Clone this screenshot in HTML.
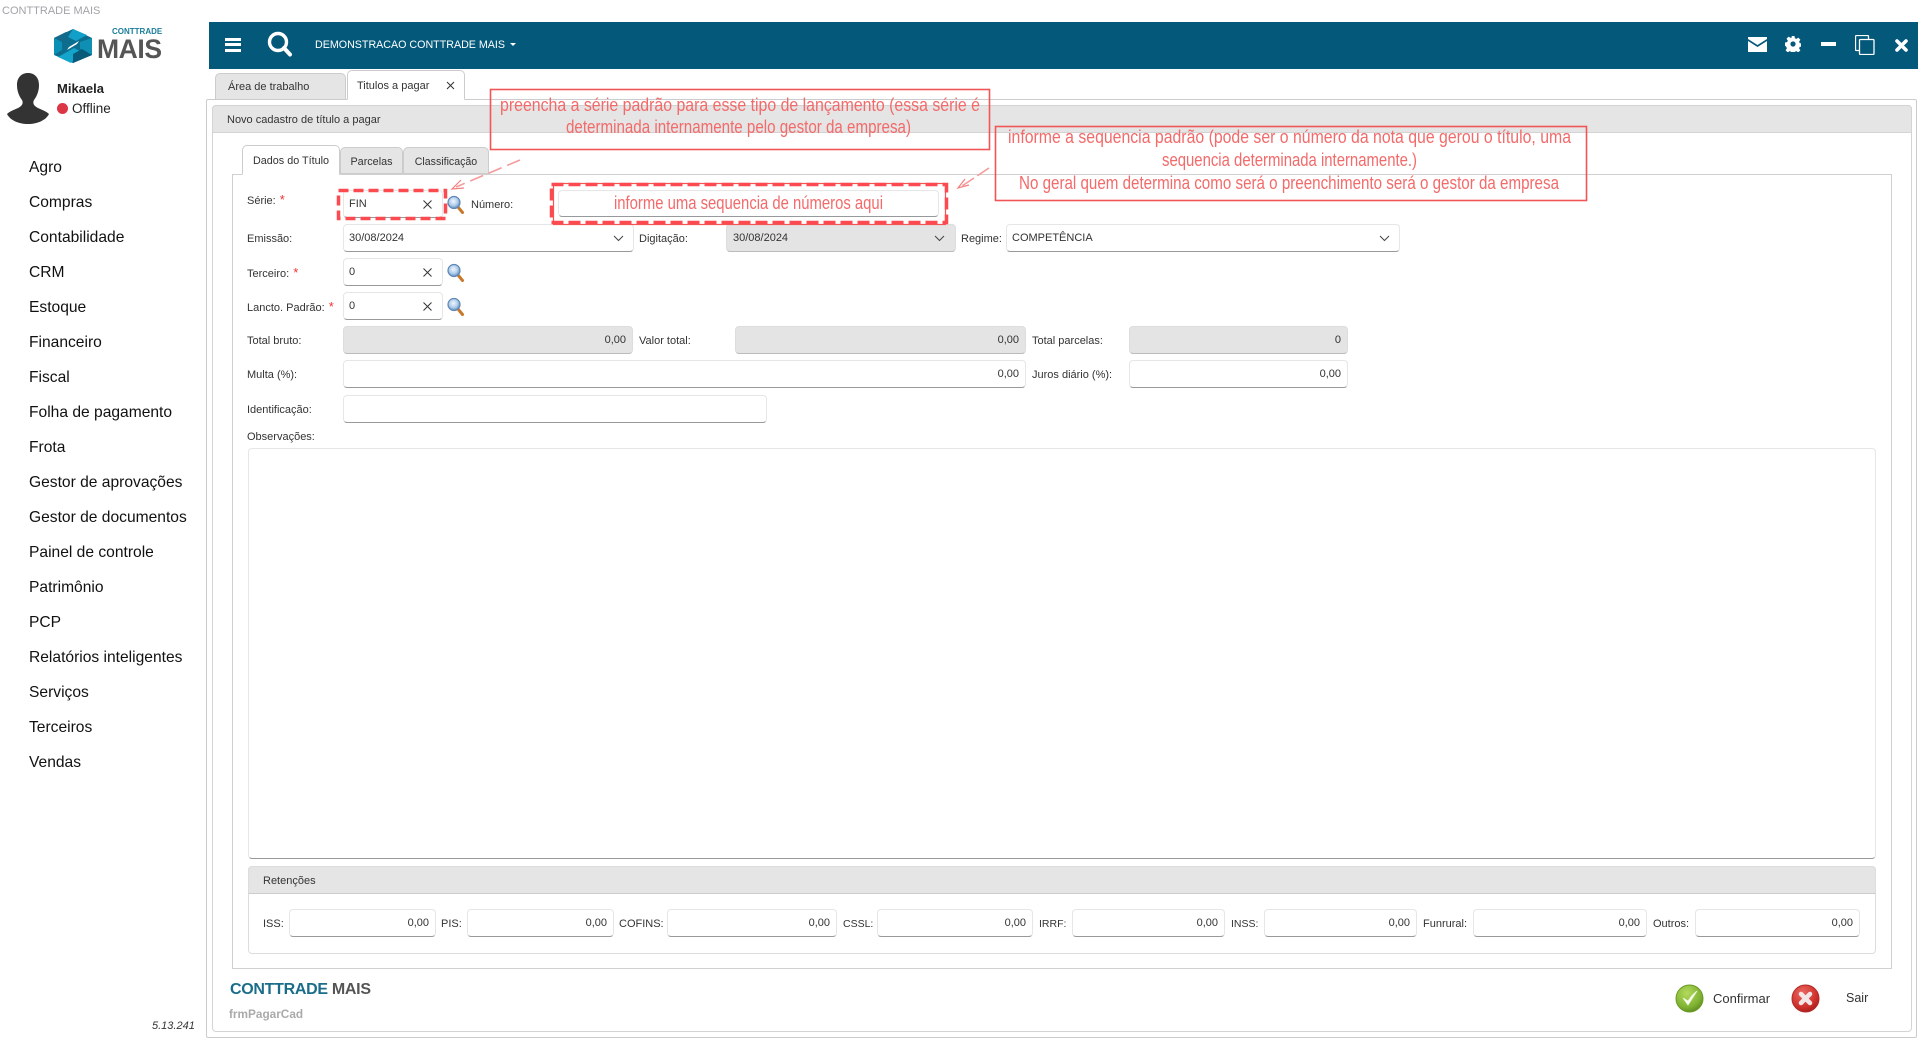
<!DOCTYPE html>
<html lang="pt-BR">
<head>
<meta charset="utf-8">
<title>CONTTRADE MAIS</title>
<style>
html,body{margin:0;padding:0;background:#fff;}
body{position:relative;width:1918px;height:1039px;overflow:hidden;font-family:"Liberation Sans",Arial,sans-serif;font-size:11px;color:#333;}
div,span{box-sizing:border-box;}
.a{position:absolute;}
.l{position:absolute;line-height:14px;white-space:nowrap;color:#333;font-size:11px;margin-top:1px;}
.s{color:#e33;font-size:13px;margin-left:1px;}
.i{position:absolute;height:28px;background:#fff;border:1px solid #e6e6e6;border-bottom:1px solid #999;border-radius:4px;line-height:27px;padding:0 6px;font-size:11px;color:#333;white-space:nowrap;}
.d{background:#e4e4e4;border:1px solid #ddd;border-bottom:1px solid #bbb;}
.r{text-align:right;}
.m{position:absolute;left:29px;font-size:15.6px;line-height:20px;color:#111;white-space:nowrap;margin-top:1px;}
.x{position:absolute;right:10px;top:9px;}
.t{position:absolute;background:#e5e5e5;border:1px solid #ccc;border-bottom:1px solid #ccc;border-radius:5px 5px 0 0;text-align:center;white-space:nowrap;}
.on{background:#fff;border-bottom:1px solid #fff;}
.lens{position:absolute;width:17px;height:19px;}
</style>
</head>
<body>
<svg width="0" height="0" style="position:absolute">
  <defs>
    <radialGradient id="gl" cx="45%" cy="40%" r="65%"><stop offset="0" stop-color="#f0f6fc"/><stop offset="0.55" stop-color="#b0cdea"/><stop offset="1" stop-color="#4f7db8"/></radialGradient>
    <radialGradient id="gg" cx="40%" cy="30%" r="75%"><stop offset="0" stop-color="#b4da5c"/><stop offset="0.7" stop-color="#7fb233"/><stop offset="1" stop-color="#5a8a1c"/></radialGradient>
    <radialGradient id="gr" cx="40%" cy="30%" r="75%"><stop offset="0" stop-color="#ea6a62"/><stop offset="0.7" stop-color="#cf2f2b"/><stop offset="1" stop-color="#a31d1b"/></radialGradient>
  </defs>
</svg>

<div class="a" style="left:2px;top:4px;font-size:11px;line-height:14px;color:#a3a3a8;white-space:nowrap;">CONTTRADE MAIS</div>

<!-- logo -->
<svg class="a" style="left:52px;top:28px" width="42" height="36" viewBox="0 0 42 36">
  <polygon points="21,1 40,10 40,27 21,35 2,27 2,10" fill="#0d6d8f"/>
  <polygon points="2,10 14,4 21,8 10,14 10,22 2,27" fill="#136a8a"/>
  <polygon points="21,1 35,7 24,13 16,9" fill="#12a0c9"/>
  <polygon points="40,10 40,27 28,21 28,14" fill="#0f8fb4"/>
  <polygon points="2,10 10,14 10,22 2,27" fill="#0b90b5"/>
  <polygon points="6,29 22,20 30,24 19,35" fill="#14a5cc"/>
  <polygon points="21,35 40,27 30,21 21,26" fill="#095a78"/>
  <polygon points="17,19 27,13 25,16 15,22" fill="#fff"/>
</svg>
<div class="a" style="left:112px;top:27px;font-size:8px;line-height:10px;font-weight:bold;color:#1a7d9a;white-space:nowrap;">CONTTRADE</div>
<div class="a" style="left:97px;top:34px;font-size:26.5px;line-height:30px;font-weight:bold;color:#555;white-space:nowrap;letter-spacing:-.4px;">MAIS</div>

<!-- user -->
<svg class="a" style="left:7px;top:73px" width="42" height="51" viewBox="0 0 42 51">
  <path d="M21 0C14 0 10 5 10 12c0 6 2 11 5 15 1 2 1 4-1 6-3 3-10 4-14 8 3 6 11 10 21 10s18-4 21-10c-4-4-11-5-14-8-2-2-2-4-1-6 3-4 5-9 5-15C32 5 28 0 21 0z" fill="#333"/>
</svg>
<div class="a" style="left:57px;top:81px;font-size:13px;line-height:15px;font-weight:bold;color:#222;">Mikaela</div>
<div class="a" style="left:57px;top:103px;width:11px;height:11px;border-radius:50%;background:#dc3545;"></div>
<div class="a" style="left:72px;top:101px;font-size:13.5px;line-height:16px;color:#222;">Offline</div>

<!-- menu -->
<div class="m" style="top:157px">Agro</div>
<div class="m" style="top:192px">Compras</div>
<div class="m" style="top:227px">Contabilidade</div>
<div class="m" style="top:262px">CRM</div>
<div class="m" style="top:297px">Estoque</div>
<div class="m" style="top:332px">Financeiro</div>
<div class="m" style="top:367px">Fiscal</div>
<div class="m" style="top:402px">Folha de pagamento</div>
<div class="m" style="top:437px">Frota</div>
<div class="m" style="top:472px">Gestor de aprovações</div>
<div class="m" style="top:507px">Gestor de documentos</div>
<div class="m" style="top:542px">Painel de controle</div>
<div class="m" style="top:577px">Patrimônio</div>
<div class="m" style="top:612px">PCP</div>
<div class="m" style="top:647px">Relatórios inteligentes</div>
<div class="m" style="top:682px">Serviços</div>
<div class="m" style="top:717px">Terceiros</div>
<div class="m" style="top:752px">Vendas</div>
<div class="a" style="left:152px;top:1020px;font-size:11px;line-height:13px;font-style:italic;color:#333;">5.13.241</div>

<!-- header -->
<div class="a" style="left:209px;top:22px;width:1709px;height:47px;background:#04587a;"></div>
<div class="a" style="left:225px;top:38px;width:16px;height:3px;background:#fff;"></div>
<div class="a" style="left:225px;top:43px;width:16px;height:3px;background:#fff;"></div>
<div class="a" style="left:225px;top:49px;width:16px;height:3px;background:#fff;"></div>
<svg class="a" style="left:267px;top:31px" width="26" height="26" viewBox="0 0 26 26"><circle cx="11" cy="11" r="8.5" fill="none" stroke="#fff" stroke-width="3.4"/><path d="M17 17l6 6.5" stroke="#fff" stroke-width="4" stroke-linecap="round"/></svg>
<div class="a" style="left:315px;top:38px;font-size:10.7px;line-height:14px;color:#fff;white-space:nowrap;">DEMONSTRACAO CONTTRADE MAIS</div>
<div class="a" style="left:510px;top:43px;width:0;height:0;border-left:3px solid transparent;border-right:3px solid transparent;border-top:3px solid #fff;"></div>
<svg class="a" style="left:1748px;top:36px" width="20" height="17" viewBox="0 0 20 17"><path d="M0 1h19v2l-9.500 6L0 3z" fill="#fff"/><path d="M0 5l9.500 6L19 5v11H0z" fill="#fff"/></svg>
<svg class="a" style="left:1785px;top:36px" width="16" height="16" viewBox="0 0 16 16"><path d="M6.500 0h3l.4 2.300 1.500.6 1.900-1.300 2.100 2.100-1.300 1.900.6 1.500 2.300.4v3l-2.300.4-.6 1.500 1.300 1.900-2.100 2.100-1.900-1.300-1.500.6-.4 2.300h-3l-.4-2.300-1.500-.6-1.900 1.300-2.100-2.100 1.300-1.900-.6-1.500L-.1 9.500v-3l2.300-.4.6-1.500L1.500 2.700l2.100-2.100 1.900 1.300 1.500-.6z" fill="#fff"/><circle cx="8" cy="8" r="2.600" fill="#04587a"/></svg>
<div class="a" style="left:1821px;top:42px;width:15px;height:4px;background:#fff;"></div>
<svg class="a" style="left:1855px;top:35px" width="20" height="20" viewBox="0 0 20 20" fill="none" stroke="#fff" stroke-width="1.300"><path d="M4.500 15.500H1.500a1 1 0 0 1-1-1V1.500a1 1 0 0 1 1-1h11a1 1 0 0 1 1 1V4"/><rect x="4.500" y="4.500" width="14.500" height="15" rx="1"/></svg>
<svg class="a" style="left:1895px;top:39px" width="13" height="13" viewBox="0 0 13 13"><path d="M2 2l9 9M11 2l-9 9" stroke="#fff" stroke-width="3.600" stroke-linecap="round"/></svg>

<!-- outer frame -->
<div class="a" style="left:206px;top:99px;width:1711px;height:939px;border:1px solid #ccc;border-radius:2px;"></div>
<!-- top tabs -->
<div class="t" style="left:215px;top:73px;width:131px;height:27px;line-height:26px;font-size:11px;color:#333;text-align:left;padding-left:12px;">Área de trabalho</div>
<div class="t on" style="left:347px;top:70px;width:118px;height:30px;"></div>
<div class="a" style="left:357px;top:79px;font-size:11px;line-height:14px;color:#333;white-space:nowrap;">Titulos a pagar</div>
<svg class="a" style="left:446px;top:81px" width="9" height="9" viewBox="0 0 9 9"><path d="M1 1l7 7M8 1L1 8" stroke="#333" stroke-width="1"/></svg>

<!-- panel -->
<div class="a" style="left:212px;top:105px;width:1700px;height:927px;border:1px solid #d4d4d4;border-radius:4px;background:#fff;"></div>
<div class="a" style="left:212px;top:105px;width:1700px;height:28px;background:#e5e5e5;border:1px solid #d4d4d4;border-radius:4px 4px 0 0;"></div>
<div class="a" style="left:227px;top:113px;font-size:11px;line-height:14px;color:#333;white-space:nowrap;">Novo cadastro de título a pagar</div>

<!-- inner tabs -->
<div class="a" style="left:232px;top:174px;width:1660px;height:795px;border:1px solid #d0d0d0;"></div>
<div class="t on" style="left:242px;top:145px;width:98px;height:30px;line-height:30px;font-size:10.8px;color:#333;">Dados do Título</div>
<div class="t" style="left:340px;top:147px;width:63px;height:27px;line-height:28px;font-size:10.8px;color:#333;">Parcelas</div>
<div class="t" style="left:403px;top:147px;width:86px;height:27px;line-height:28px;font-size:10.6px;color:#333;">Classificação</div>

<!-- row 1 -->
<div class="l" style="left:247px;top:192px">Série: <span class="s">*</span></div>
<div class="i" style="left:343px;top:190px;width:100px;padding-left:5px;">FIN<svg class="x" width="9" height="9" viewBox="0 0 9 9"><path d="M.5.5l8 8M8.500.5l-8 8" stroke="#333" stroke-width="1"/></svg></div>
<svg class="lens" style="left:447px;top:195px" viewBox="0 0 17 19"><path d="M11 12l4.500 5.500" stroke="#c8792b" stroke-width="3" stroke-linecap="round"/><circle cx="7" cy="7.500" r="6" fill="url(#gl)" stroke="#5f86b5" stroke-width="1.200"/></svg>
<div class="l" style="left:471px;top:197px">Número:</div>
<div class="i" style="left:558px;top:190px;width:381px;height:27px;"></div>

<!-- row 2 -->
<div class="l" style="left:247px;top:231px">Emissão:</div>
<div class="i" style="left:343px;top:224px;width:291px;padding-left:5px;">30/08/2024<svg class="a" style="left:269px;top:10px" width="11" height="7" viewBox="0 0 11 7"><path d="M1 1l4.500 4.500L10 1" fill="none" stroke="#444" stroke-width="1"/></svg></div>
<div class="l" style="left:639px;top:231px">Digitação:</div>
<div class="i d" style="left:726px;top:224px;width:230px;">30/08/2024<svg class="a" style="left:207px;top:10px" width="11" height="7" viewBox="0 0 11 7"><path d="M1 1l4.500 4.500L10 1" fill="none" stroke="#444" stroke-width="1"/></svg></div>
<div class="l" style="left:961px;top:231px">Regime:</div>
<div class="i" style="left:1006px;top:224px;width:394px;padding-left:5px;">COMPETÊNCIA<svg class="a" style="left:372px;top:10px" width="11" height="7" viewBox="0 0 11 7"><path d="M1 1l4.500 4.500L10 1" fill="none" stroke="#444" stroke-width="1"/></svg></div>

<!-- row 3 -->
<div class="l" style="left:247px;top:265px">Terceiro: <span class="s">*</span></div>
<div class="i" style="left:343px;top:258px;width:100px;padding-left:5px;">0<svg class="x" width="9" height="9" viewBox="0 0 9 9"><path d="M.5.5l8 8M8.500.5l-8 8" stroke="#333" stroke-width="1"/></svg></div>
<svg class="lens" style="left:447px;top:263px" viewBox="0 0 17 19"><path d="M11 12l4.500 5.500" stroke="#c8792b" stroke-width="3" stroke-linecap="round"/><circle cx="7" cy="7.500" r="6" fill="url(#gl)" stroke="#5f86b5" stroke-width="1.200"/></svg>

<!-- row 4 -->
<div class="l" style="left:247px;top:299px">Lancto. Padrão: <span class="s">*</span></div>
<div class="i" style="left:343px;top:292px;width:100px;padding-left:5px;">0<svg class="x" width="9" height="9" viewBox="0 0 9 9"><path d="M.5.5l8 8M8.500.5l-8 8" stroke="#333" stroke-width="1"/></svg></div>
<svg class="lens" style="left:447px;top:297px" viewBox="0 0 17 19"><path d="M11 12l4.500 5.500" stroke="#c8792b" stroke-width="3" stroke-linecap="round"/><circle cx="7" cy="7.500" r="6" fill="url(#gl)" stroke="#5f86b5" stroke-width="1.200"/></svg>

<!-- row 5 -->
<div class="l" style="left:247px;top:333px">Total bruto:</div>
<div class="i d r" style="left:343px;top:326px;width:290px;">0,00</div>
<div class="l" style="left:639px;top:333px">Valor total:</div>
<div class="i d r" style="left:735px;top:326px;width:291px;">0,00</div>
<div class="l" style="left:1032px;top:333px">Total parcelas:</div>
<div class="i d r" style="left:1129px;top:326px;width:219px;">0</div>

<!-- row 6 -->
<div class="l" style="left:247px;top:367px">Multa (%):</div>
<div class="i r" style="left:343px;top:360px;width:683px;">0,00</div>
<div class="l" style="left:1032px;top:367px">Juros diário (%):</div>
<div class="i r" style="left:1129px;top:360px;width:219px;">0,00</div>

<!-- row 7 -->
<div class="l" style="left:247px;top:402px">Identificação:</div>
<div class="i" style="left:343px;top:395px;width:424px;"></div>
<div class="l" style="left:247px;top:429px">Observações:</div>
<div class="i" style="left:248px;top:448px;width:1628px;height:411px;"></div>

<!-- retencoes -->
<div class="a" style="left:248px;top:866px;width:1628px;height:88px;border:1px solid #ddd;border-radius:4px;"></div>
<div class="a" style="left:248px;top:866px;width:1628px;height:28px;background:#e5e5e5;border:1px solid #ddd;border-bottom:1px solid #ccc;border-radius:4px 4px 0 0;"></div>
<div class="l" style="left:263px;top:873px">Retenções</div>
<div class="l" style="left:263px;top:916px">ISS:</div>
<div class="i r" style="left:289px;top:909px;width:147px;">0,00</div>
<div class="l" style="left:441px;top:916px">PIS:</div>
<div class="i r" style="left:467px;top:909px;width:147px;">0,00</div>
<div class="l" style="left:619px;top:916px">COFINS:</div>
<div class="i r" style="left:667px;top:909px;width:170px;">0,00</div>
<div class="l" style="left:843px;top:916px;font-size:10.5px;">CSSL:</div>
<div class="i r" style="left:877px;top:909px;width:156px;">0,00</div>
<div class="l" style="left:1039px;top:916px;font-size:10.5px;">IRRF:</div>
<div class="i r" style="left:1072px;top:909px;width:153px;">0,00</div>
<div class="l" style="left:1231px;top:916px;font-size:10.5px;">INSS:</div>
<div class="i r" style="left:1264px;top:909px;width:153px;">0,00</div>
<div class="l" style="left:1423px;top:916px">Funrural:</div>
<div class="i r" style="left:1473px;top:909px;width:174px;">0,00</div>
<div class="l" style="left:1653px;top:916px">Outros:</div>
<div class="i r" style="left:1695px;top:909px;width:165px;">0,00</div>

<!-- footer -->
<div class="a" style="left:230px;top:980px;font-size:16px;line-height:20px;font-weight:bold;color:#1a6d8a;white-space:nowrap;letter-spacing:-.3px;">CONTTRADE <span style="color:#555">MAIS</span></div>
<div class="a" style="left:229px;top:1007px;font-size:11.8px;line-height:14px;font-weight:bold;color:#aaa;white-space:nowrap;">frmPagarCad</div>
<svg class="a" style="left:1675px;top:984px" width="29" height="29" viewBox="0 0 29 29"><circle cx="14.500" cy="14.500" r="13.500" fill="url(#gg)" stroke="#6b9a26" stroke-width="1"/><path d="M8 14l5 7L22 7c-4 3-7 7-9 10z" fill="#fff" stroke="#eaf5d4" stroke-width=".8"/></svg>
<div class="a" style="left:1713px;top:991px;font-size:13px;line-height:15px;color:#333;">Confirmar</div>
<svg class="a" style="left:1791px;top:984px" width="29" height="29" viewBox="0 0 29 29"><circle cx="14.500" cy="14.500" r="13.500" fill="url(#gr)" stroke="#b22a27" stroke-width="1"/><path d="M10 10l9 9M19 10l-9 9" stroke="#f3e6e6" stroke-width="4.500" stroke-linecap="round"/></svg>
<div class="a" style="left:1846px;top:991px;font-size:12.5px;line-height:15px;color:#333;">Sair</div>

<!-- annotations -->
<svg class="a" style="left:0;top:0;pointer-events:none" width="1918" height="1039" viewBox="0 0 1918 1039" font-family="'Liberation Sans',sans-serif" font-size="18" fill="#f36a6a">
  <rect x="490.500" y="89.500" width="499" height="60" fill="none" stroke="#f25555" stroke-width="1.600"/>
  <text x="500" y="111" textLength="480" lengthAdjust="spacingAndGlyphs">preencha a série padrão para esse tipo de lançamento (essa série é</text>
  <text x="566" y="133" textLength="345" lengthAdjust="spacingAndGlyphs">determinada internamente pelo gestor da empresa)</text>

  <rect x="995.500" y="126.500" width="591" height="74" fill="none" stroke="#f25555" stroke-width="1.600"/>
  <text x="1008" y="143" textLength="563" lengthAdjust="spacingAndGlyphs">informe a sequencia padrão (pode ser o número da nota que gerou o título, uma</text>
  <text x="1162" y="166" textLength="255" lengthAdjust="spacingAndGlyphs">sequencia determinada internamente.)</text>
  <text x="1019" y="189" textLength="540" lengthAdjust="spacingAndGlyphs">No geral quem determina como será o preenchimento será o gestor da empresa</text>

  <rect x="338.500" y="190.500" width="107" height="28" fill="none" stroke="#fb4b50" stroke-width="3.500" stroke-dasharray="10 5"/>

  <rect x="553.500" y="183.500" width="392" height="41" fill="none" stroke="#f25555" stroke-width="1.200"/>
  <rect x="551.500" y="184.500" width="395" height="38" fill="none" stroke="#fb4b50" stroke-width="3.500" stroke-dasharray="12 5"/>
  <text x="614" y="209" textLength="269" lengthAdjust="spacingAndGlyphs">informe uma sequencia de números aqui</text>

  <path d="M520 160L456 187" fill="none" stroke="#f59a9a" stroke-width="1.600" stroke-dasharray="14 6"/>
  <path d="M461 180l-9 9 12-1" fill="none" stroke="#f28080" stroke-width="1.200"/>
  <path d="M989 168L962 186" fill="none" stroke="#f59a9a" stroke-width="1.600" stroke-dasharray="14 4"/>
  <path d="M965 179l-7 9 11-3" fill="none" stroke="#f28080" stroke-width="1.200"/>
</svg>
</body>
</html>
